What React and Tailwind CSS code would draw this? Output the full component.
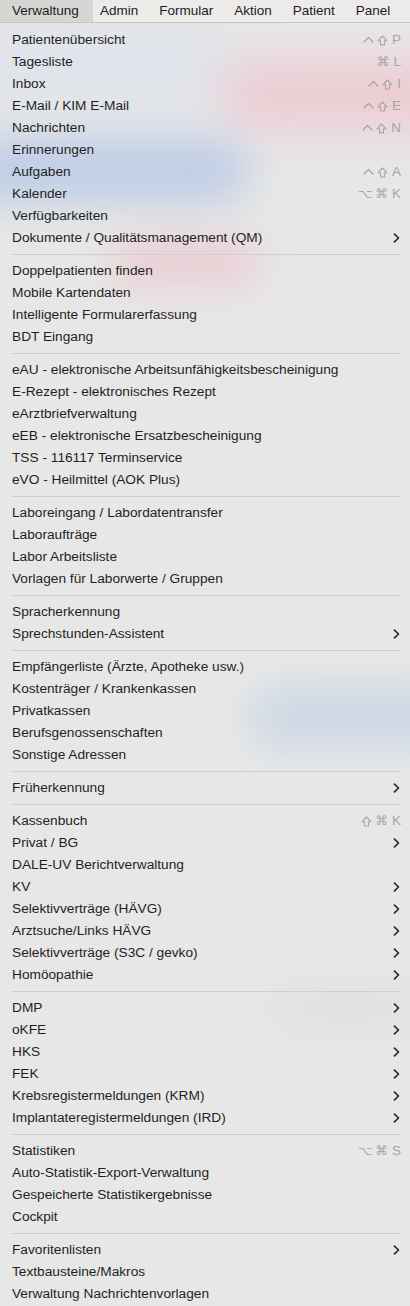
import React from "react";

const sections = [
  [
    ["Patientenübersicht", "^⇧P"],
    ["Tagesliste", "⌘L"],
    ["Inbox", "^⇧I"],
    ["E-Mail / KIM E-Mail", "^⇧E"],
    ["Nachrichten", "^⇧N"],
    ["Erinnerungen"],
    ["Aufgaben", "^⇧A"],
    ["Kalender", "⌥⌘K"],
    ["Verfügbarkeiten"],
    ["Dokumente / Qualitätsmanagement (QM)", ">"],
  ],
  [
    ["Doppelpatienten finden"],
    ["Mobile Kartendaten"],
    ["Intelligente Formularerfassung"],
    ["BDT Eingang"],
  ],
  [
    ["eAU - elektronische Arbeitsunfähigkeitsbescheinigung"],
    ["E-Rezept - elektronisches Rezept"],
    ["eArztbriefverwaltung"],
    ["eEB - elektronische Ersatzbescheinigung"],
    ["TSS - 116117 Terminservice"],
    ["eVO - Heilmittel (AOK Plus)"],
  ],
  [
    ["Laboreingang / Labordatentransfer"],
    ["Laboraufträge"],
    ["Labor Arbeitsliste"],
    ["Vorlagen für Laborwerte / Gruppen"],
  ],
  [
    ["Spracherkennung"],
    ["Sprechstunden-Assistent", ">"],
  ],
  [
    ["Empfängerliste (Ärzte, Apotheke usw.)"],
    ["Kostenträger / Krankenkassen"],
    ["Privatkassen"],
    ["Berufsgenossenschaften"],
    ["Sonstige Adressen"],
  ],
  [["Früherkennung", ">"]],
  [
    ["Kassenbuch", "⇧⌘K"],
    ["Privat / BG", ">"],
    ["DALE-UV Berichtverwaltung"],
    ["KV", ">"],
    ["Selektivverträge (HÄVG)", ">"],
    ["Arztsuche/Links HÄVG", ">"],
    ["Selektivverträge (S3C / gevko)", ">"],
    ["Homöopathie", ">"],
  ],
  [
    ["DMP", ">"],
    ["oKFE", ">"],
    ["HKS", ">"],
    ["FEK", ">"],
    ["Krebsregistermeldungen (KRM)", ">"],
    ["Implantateregistermeldungen (IRD)", ">"],
  ],
  [
    ["Statistiken", "⌥⌘S"],
    ["Auto-Statistik-Export-Verwaltung"],
    ["Gespeicherte Statistikergebnisse"],
    ["Cockpit"],
  ],
  [
    ["Favoritenlisten", ">"],
    ["Textbausteine/Makros"],
    ["Verwaltung Nachrichtenvorlagen"],
  ],
];

const topMenu = ["Admin", "Formular", "Aktion", "Patient", "Panel"];

function Chevron() {
  return (
    <svg width="7" height="10" viewBox="0 0 7 10" className="mr-[1px]">
      <path d="M1.5 1.2 L5.5 5 L1.5 8.8" fill="none" stroke="#2a2a2a" strokeWidth="1.7" strokeLinecap="round" strokeLinejoin="round" />
    </svg>
  );
}

function CaretKey() {
  return (
    <svg width="11" height="10" viewBox="0 0 11 10">
      <path d="M1 7 L5.5 2.5 L10 7" fill="none" stroke="#a6a6a6" strokeWidth="1.3" strokeLinecap="round" strokeLinejoin="round" />
    </svg>
  );
}

function ShiftKey() {
  return (
    <svg width="11" height="11" viewBox="0 0 11 11">
      <path d="M5.5 1 L10 5.8 H7.5 V10 H3.5 V5.8 H1 Z" fill="none" stroke="#a6a6a6" strokeWidth="1.1" strokeLinejoin="round" />
    </svg>
  );
}

function Shortcut({ keys }) {
  const arr = Array.from(keys);
  return (
    <span className="flex items-center gap-[3px] text-[#a6a6a6]">
      {arr.map((k, i) => {
        if (k === "^") return <CaretKey key={i} />;
        if (k === "⇧") return <ShiftKey key={i} />;
        if (i === arr.length - 1)
          return (
            <span key={i} className="text-[13.5px] font-['Liberation_Sans',sans-serif] ml-[1px]">
              {k}
            </span>
          );
        return (
          <span key={i} className="text-[12.5px] font-['DejaVu_Sans',sans-serif]">
            {k}
          </span>
        );
      })}
    </span>
  );
}

function Item({ label, extra }) {
  return (
    <div className="h-[22px] flex items-center justify-between pl-[12px] pr-[9px]">
      <span className="text-[13.7px] text-[#1f1f1f]">{label}</span>
      {extra === ">" ? <Chevron /> : extra ? <Shortcut keys={extra} /> : null}
    </div>
  );
}

export default function App() {
  return (
    <div className="w-[410px] h-[1306px] overflow-hidden bg-[#e7e7e7] font-['Liberation_Sans','Noto_Sans',sans-serif] relative">
      <div className="absolute inset-0 overflow-hidden pointer-events-none">
        <div className="absolute left-[-60px] top-[20px] w-[300px] h-[90px] rounded-full bg-[#dfe3ec] blur-[24px] opacity-80" />
        <div className="absolute left-[220px] top-[62px] w-[260px] h-[65px] rounded-full bg-[#efc3cd] blur-[24px] opacity-80" />
        <div className="absolute left-[-40px] top-[140px] w-[290px] h-[60px] rounded-full bg-[#b8c8e6] blur-[22px] opacity-90" />
        <div className="absolute left-[110px] top-[240px] w-[150px] h-[45px] rounded-full bg-[#ecc5cd] blur-[20px] opacity-80" />
        <div className="absolute left-[250px] top-[690px] w-[220px] h-[55px] rounded-full bg-[#c6d4e4] blur-[22px] opacity-90" />
        <div className="absolute left-[270px] top-[990px] w-[160px] h-[35px] rounded-full bg-[#dcdcdc] blur-[20px] opacity-70" />
      </div>
      <div className="relative">
        <div className="h-[23px] flex items-stretch bg-[#ecebea] border-b border-[#c4c4c4] text-[13.5px] text-[#1c1c1c]">
          <div className="w-[93px] pl-[12px] flex items-center bg-[#d6d6d4]">Verwaltung</div>
          <div className="flex items-center gap-[21px] pl-[7px]">
            {topMenu.map((m) => (
              <span key={m}>{m}</span>
            ))}
          </div>
        </div>
        <div className="pt-[6px]">
          {sections.map((sec, si) => (
            <div key={si}>
              {si > 0 && (
                <div className="h-[11px] flex items-center pl-[12px] pr-[9px]">
                  <div className="h-px w-full bg-[#cfcfcf]" />
                </div>
              )}
              {sec.map(([label, extra]) => (
                <Item key={label} label={label} extra={extra} />
              ))}
            </div>
          ))}
        </div>
      </div>
    </div>
  );
}
